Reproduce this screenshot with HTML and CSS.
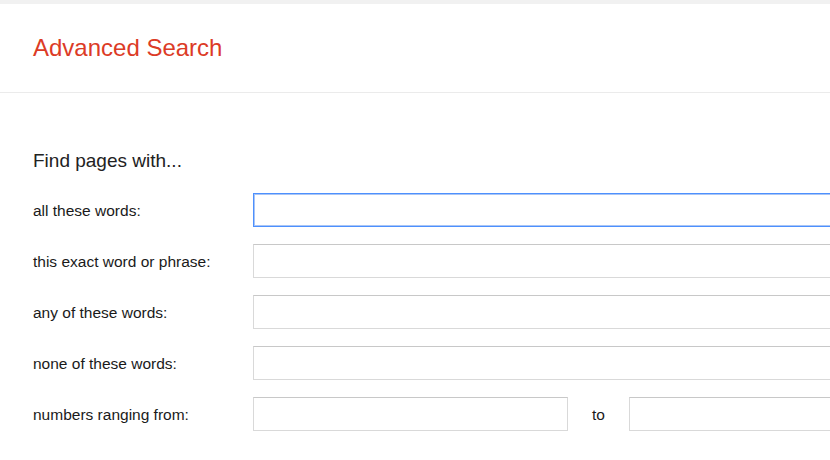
FILE: index.html
```html
<!DOCTYPE html>
<html lang="en">
<head>
<meta charset="utf-8">
<title>Advanced Search</title>
<link rel="stylesheet" href="styles.css">
</head>
<body>
<div class="topbar"></div>
<header class="header">
  <h1 class="title">Advanced Search</h1>
</header>
<main class="main">
  <h2 class="section-title">Find pages with...</h2>
  <div class="rows">
    <div class="row">
      <label class="label">all these words:</label>
      <div class="field field-focus"></div>
    </div>
    <div class="row">
      <label class="label">this exact word or phrase:</label>
      <div class="field"></div>
    </div>
    <div class="row">
      <label class="label">any of these words:</label>
      <div class="field"></div>
    </div>
    <div class="row">
      <label class="label">none of these words:</label>
      <div class="field"></div>
    </div>
    <div class="row">
      <label class="label">numbers ranging from:</label>
      <div class="field field-short"></div>
      <span class="to">to</span>
      <div class="field field-end"></div>
    </div>
  </div>
</main>
</body>
</html>
```
FILE: styles.css
```css
html, body {
  margin: 0;
  padding: 0;
  background: #fff;
  overflow: hidden;
  width: 830px;
  height: 460px;
  font-family: "Liberation Sans", Arial, sans-serif;
  color: #222;
}
.topbar {
  height: 4px;
  background: #f1f1f1;
}
.header {
  box-sizing: border-box;
  height: 89px;
  padding: 32px 33px 0;
  border-bottom: 1px solid #ebebeb;
}
.title {
  margin: 0;
  font-size: 24px;
  line-height: 24px;
  font-weight: normal;
  color: #dc3b26;
}
.main {
  padding: 58px 0 0 33px;
}
.section-title {
  margin: 0 0 23px;
  font-size: 19px;
  line-height: 19px;
  font-weight: normal;
  color: #222;
}
.rows {
  display: flex;
  flex-direction: column;
  gap: 17px;
}
.row {
  display: flex;
  align-items: center;
  height: 34px;
}
.label {
  flex: 0 0 220px;
  padding-top: 2px;
  font-size: 15.5px;
  color: #1a1a1a;
}
.field {
  box-sizing: border-box;
  flex: 0 0 577px;
  height: 34px;
  border: 1px solid #d9d9d9;
  border-top-color: #c8c8c8;
  border-right: none;
  background: #fff;
}
.field-focus {
  border: 1px solid #4d90fe;
  border-right: none;
  box-shadow: inset 0 1px 0 #a9c5f5, inset 0 -1px 0 #a9c5f5, inset 1px 0 0 #a9c5f5;
}
.field-short {
  flex: 0 0 315px;
  border-right: 1px solid #d9d9d9;
}
.field-end {
  flex: 0 0 201px;
}
.to {
  flex: 0 0 61px;
  padding-top: 2px;
  text-align: center;
  font-size: 15.5px;
  color: #1a1a1a;
}
```
